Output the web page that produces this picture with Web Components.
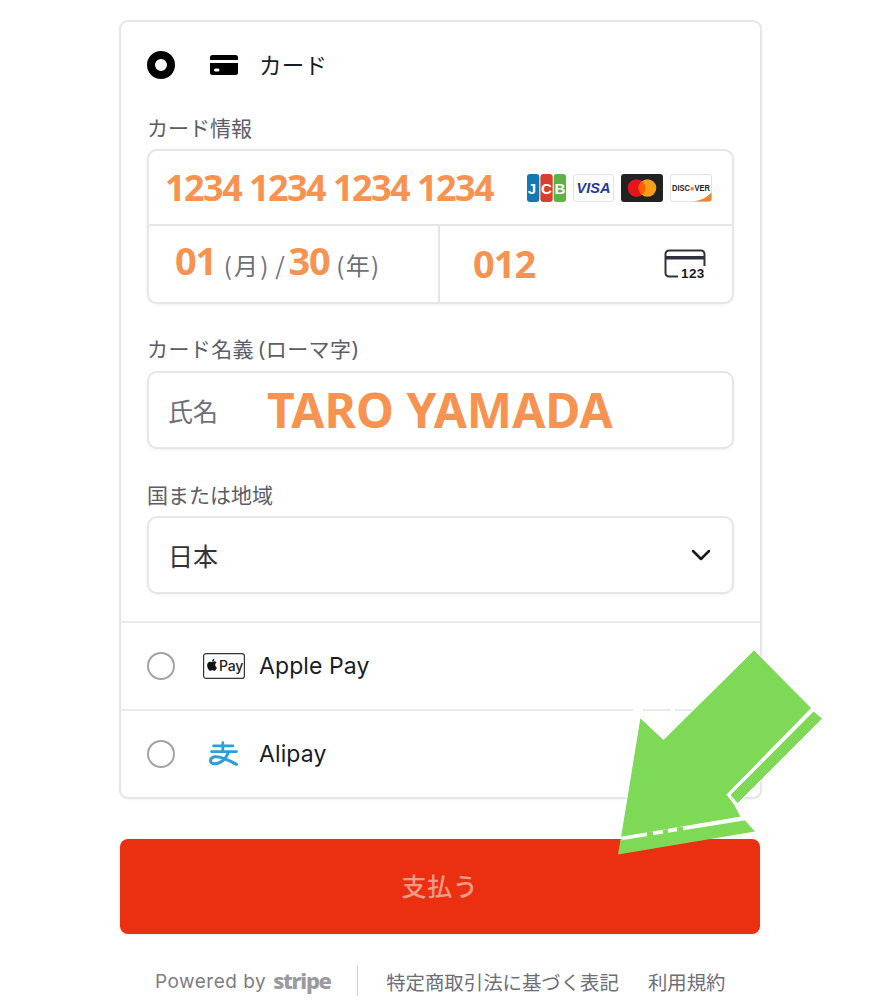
<!DOCTYPE html>
<html lang="ja"><head><meta charset="utf-8"><title>Payment</title>
<style>
html,body{margin:0;background:#fff}
body{font-family:"Noto Sans CJK JP","Noto Sans",sans-serif;color:#30313d;width:880px;height:1000px;overflow:hidden;position:relative}
</style></head><body>
<pay-page>
  <pay-methods>
    <pay-method selected label="カード">
      <svg slot="icon" width="28" height="20" viewBox="0 0 28 20" style="margin-left:7px"><path fill="#000" fill-rule="evenodd" d="M2.500 0h23A2.500 2.500 0 0 1 28 2.500V5H0V2.500A2.500 2.500 0 0 1 2.500 0zM0 8h28v9.500A2.500 2.500 0 0 1 25.500 20h-23A2.500 2.500 0 0 1 0 17.500zm5.500 5.500a1 1 0 0 0 0 3h2.500a1 1 0 0 0 0-3z"/></svg>
      <pay-label>カード情報</pay-label>
      <card-field></card-field>
      <pay-label class="second" style="height:43px"><span style="letter-spacing:.4px">カード名義 <span style="font-family:'Noto Sans',sans-serif">(</span>ローマ字<span style="font-family:'Noto Sans',sans-serif">)</span></span></pay-label>
      <pay-input>
        <span style="color:#6d6e78;font-size:25px;width:99px;flex:none">氏名</span>
        <orange-text size="48" spacing="0">TARO YAMADA</orange-text>
      </pay-input>
      <pay-label class="second" style="margin-top:25px">国または地域</pay-label>
      <pay-input>
        <span style="color:#30313d;font-size:25px;flex:1">日本</span>
        <svg width="20" height="12" viewBox="0 0 20 12" style="margin-right:2px"><path d="M2 2l8 8 8-8" fill="none" stroke="#1a1a1a" stroke-width="2.500" stroke-linecap="round" stroke-linejoin="round"/></svg>
      </pay-input>
    </pay-method>
    <pay-method label="Apple Pay">
      <svg slot="icon" width="42" height="26" viewBox="0 0 42 26"><rect x=".6" y=".6" width="40.800" height="24.800" rx="2.500" fill="#fff" stroke="#333" stroke-width="1.200"/><path fill="#111" d="M11.800 9.300c.5-.6.800-1.300.7-2-.7 0-1.500.4-1.900 1-.4.500-.8 1.300-.7 2 .7.100 1.400-.4 1.900-1zm.7 1c-1-.1-1.900.6-2.400.6s-1.300-.6-2.100-.5c-1.100 0-2.100.6-2.600 1.600-1.100 1.900-.3 4.700.8 6.300.5.8 1.200 1.600 2 1.600.8 0 1.100-.5 2.100-.5s1.300.5 2.100.5c.9 0 1.400-.8 1.900-1.600.6-.9.900-1.700.9-1.800 0 0-1.800-.7-1.800-2.700 0-1.700 1.400-2.500 1.400-2.500-.8-1.200-2-1.300-2.400-1.300z" transform="translate(-.5 -1.200) scale(.95)"/><text x="16" y="18" font-family="Inter,'Liberation Sans',sans-serif" font-size="14" font-weight="500" fill="#222" letter-spacing="-.2">Pay</text></svg>
    </pay-method>
    <pay-method label="Alipay">
      <svg slot="icon" width="32" height="26" viewBox="0 0 32 26" style="margin-left:5px"><g fill="none" stroke="#2a9fd8" stroke-linecap="round" stroke-linejoin="round"><path stroke-width="2.700" d="M5.500 4.800h19.500M14.800 1.500v9M3.500 10.600h25"/><path stroke-width="3" d="M20.500 11c-2 5.500-6.500 10-10.500 11.300-4 1.200-7.500.2-7.500-2.500 0-2.500 2.300-4 5.500-4 5 0 12 3 20.500 7.500"/></g></svg>
    </pay-method>
  </pay-methods>
  <pay-button>支払う</pay-button>
  <pay-footer></pay-footer>
</pay-page>
<pay-arrow></pay-arrow>
<script>
function def(name, html, init){
  customElements.define(name, class extends HTMLElement{
    connectedCallback(){
      if(this.shadowRoot) return;
      const r=this.attachShadow({mode:'open'});
      r.innerHTML=typeof html==='function'?html(this):html;
      if(init) init(this,r);
    }
  });
}
def('pay-page',`<style>:host{display:block;box-sizing:border-box;width:880px;height:1000px;padding:20px 119px 0;font-family:"Noto Sans CJK JP","Noto Sans",sans-serif}</style><slot></slot>`);
def('pay-methods',`<style>:host{display:block;box-sizing:border-box;width:643px;height:779px;border:2px solid #e6e6e6;border-radius:9px;background:#fff;box-shadow:0 1px 2px rgba(0,0,0,.05)}
::slotted(pay-method:not(:first-child)){border-top:2px solid #ebebeb}</style><slot></slot>`);
def('pay-method',h=>{const latin=/^[A-Z]/.test(h.getAttribute('label'));return `<style>
:host{display:block;box-sizing:border-box;height:88px}
:host([selected]){height:599px}
.row{display:flex;align-items:center;height:86px}
.radio{box-sizing:border-box;width:28px;height:28px;border-radius:50%;margin-left:26px;flex:none;border:2px solid #a3a3a3}
:host([selected]) .radio{border:8.500px solid #000;background:#fff}
.ic{width:56px;margin-left:28px;flex:none;display:flex;align-items:center;height:30px}
.t{font-size:22.500px;color:#1a1b25;font-family:"Noto Sans CJK JP",sans-serif;letter-spacing:.2px;margin-top:-3px}
.latin{font-family:"Inter","Liberation Sans",sans-serif;font-size:23px;letter-spacing:.1px;margin-top:0}
.body{padding:0 26px}
</style>
<div class="row"><span class="radio"></span><span class="ic"><slot name="icon"></slot></span><span class="t ${latin?'latin':''}">${h.getAttribute('label')}</span></div>
<div class="body"><slot></slot></div>`});
def('pay-label',`<style>:host{display:block;height:42px;line-height:40px;font-size:21px;color:#5c5d68;margin-top:-1px;white-space:nowrap}
:host(.second){margin-top:24px}</style><slot></slot>`);
def('pay-input',`<style>:host{display:flex;align-items:center;box-sizing:border-box;height:78px;width:587px;padding:0 19px;border:2px solid #e6e6e6;border-radius:10px;background:#fff;box-shadow:0 1px 3px rgba(0,0,0,.06)}</style><slot></slot>`);
def('orange-text',h=>`<style>:host{font-family:"Noto Sans",sans-serif;font-weight:700;color:#f79351;font-size:${h.getAttribute('size')}px;letter-spacing:${h.getAttribute('spacing')||0}px;line-height:1;white-space:pre}</style><slot></slot>`);
def('card-field',`<style>
:host{display:block;box-sizing:border-box;width:587px;height:155px;border:2px solid #e6e6e6;border-radius:10px;background:#fff;box-shadow:0 1px 3px rgba(0,0,0,.06)}
.top{display:flex;align-items:center;height:75px;box-sizing:border-box;border-bottom:2px solid #e6e6e6;padding:0 20px 0 16px;justify-content:space-between}
.bottom{display:grid;grid-template-columns:291px 1fr;height:76px}
.exp{display:flex;align-items:baseline;padding:11px 0 0 26px;border-right:2px solid #e6e6e6;color:#6d6e78;font-size:24px;line-height:56px;white-space:pre}
.a{letter-spacing:2.200px}.b{letter-spacing:-.7px}.c{letter-spacing:1.300px}
.cvc{display:flex;align-items:center;justify-content:space-between;padding:0 26px 0 33px}
</style>
<div class="top"><orange-text size="36" spacing="-1.550">1234 1234 1234 1234</orange-text><brand-logos></brand-logos></div>
<div class="bottom"><div class="exp"><orange-text size="38" spacing="-1.200">01</orange-text><span class="a"> (月)</span><span class="b"> / </span><orange-text size="38" spacing="-1.200">30</orange-text><span class="c"> (年)</span></div>
<div class="cvc"><orange-text size="38" spacing="-1" style="position:relative;top:-1px">012</orange-text>
<svg width="42" height="30" viewBox="0 0 42 30"><path d="M14 27.500H5a3.500 3.500 0 0 1-3.500-3.500V5A3.500 3.500 0 0 1 5 1.500h32A3.500 3.500 0 0 1 40.500 5v12" fill="none" stroke="#30313d" stroke-width="2"/><rect x="2" y="7" width="38" height="3.500" fill="#30313d"/><text x="17" y="28.500" font-family="'Liberation Sans',sans-serif" font-size="13.500" font-weight="700" fill="#1a1a1a" letter-spacing=".4">123</text></svg></div></div>`);
def('brand-logos',`<style>:host{display:flex;gap:7px;align-items:center}svg{display:block}</style>
<svg width="39" height="28" viewBox="0 0 39 28"><rect x="0" width="12.300" height="28" rx="3" fill="#1279b5"/><rect x="13.400" width="12.300" height="28" rx="3" fill="#d6402c"/><rect x="26.700" width="12.300" height="28" rx="3" fill="#5cb245"/><g font-family="'Liberation Sans',sans-serif" font-size="15" font-weight="700" fill="#fff" text-anchor="middle"><text x="5" y="20">J</text><text x="19.500" y="19.500">C</text><text x="33" y="19.500">B</text></g></svg>
<svg width="41" height="28" viewBox="0 0 41 28"><rect x=".5" y=".5" width="40" height="27" rx="2.500" fill="#fff" stroke="#e2e2e2"/><text x="20.500" y="19" font-family="'Liberation Sans',sans-serif" font-size="14.500" font-weight="700" font-style="italic" fill="#1f3a94" text-anchor="middle">VISA</text></svg>
<svg width="42" height="28" viewBox="0 0 42 28"><rect width="42" height="28" rx="3" fill="#222"/><circle cx="15.500" cy="14" r="8.800" fill="#e8141c"/><circle cx="26.500" cy="14" r="8.800" fill="#f79e1b"/><path d="M21 7.100a8.800 8.800 0 0 1 0 13.800 8.800 8.800 0 0 1 0-13.800z" fill="#ff5f00"/></svg>
<svg width="42" height="28" viewBox="0 0 42 28"><rect x=".5" y=".5" width="41" height="27" rx="2.500" fill="#fff" stroke="#e2e2e2"/><path d="M41.500 18.500V25a2.500 2.500 0 0 1-2.500 2.500H24C32 26 37 23 41.500 18.500z" fill="#e8873a"/><text x="21" y="16.800" font-family="'Liberation Sans',sans-serif" font-size="8.300" font-weight="700" fill="#222" text-anchor="middle" textLength="38" lengthAdjust="spacingAndGlyphs">DISC<tspan fill="#e8873a">●</tspan>VER</text></svg>`);
def('pay-button',`<style>:host{display:flex;align-items:center;justify-content:center;box-sizing:border-box;width:640px;height:95px;margin:40px 0 0 1px;padding-bottom:3px;border-radius:8px;background:#eb3012;color:#f29b86;font-size:25px;font-weight:500;letter-spacing:.6px;box-shadow:0 1px 3px rgba(0,0,0,.1)}</style><slot></slot>`);
def('pay-footer',`<style>:host{display:flex;align-items:center;height:32px;margin-top:31px;padding-left:36px;color:#7b7c85;font-size:19.400px;white-space:nowrap}
span{flex:none}
.p{font-family:"Inter","Liberation Sans",sans-serif;letter-spacing:.5px;font-size:19px}
.s{font-family:"Noto Sans",sans-serif;font-weight:800;font-size:22px;letter-spacing:-1.300px;color:#9a9aa0;margin-left:7px;position:relative;top:-1px}
.d{width:1.500px;height:30px;background:#cfcfd2;margin:0 28px 0 26px}
.l{margin-right:29px;color:#6d6e78}</style>
<span class="p">Powered by</span><span class="s">stripe</span><span class="d"></span><span class="l">特定商取引法に基づく表記</span><span class="l">利用規約</span>`);
def('pay-arrow',`<style>:host{position:absolute;left:0;top:0;width:880px;height:1000px;pointer-events:none}svg{display:block}</style>
<svg width="880" height="1000" viewBox="0 0 880 1000">
<path d="M633 710h10M671 710h4" stroke="#fff" stroke-width="3"/>
<g stroke="#fff" stroke-width="1" stroke-linejoin="miter">
<polygon fill="#7ed957" points="754,650 811.500,708 727,794.500 735,805.500 741,817 620.500,837.300 640,717.500 663.500,739.500"/>
<polygon fill="#7ed957" points="813.500,711 822.500,718.500 737.500,803.500 730,795"/>
</g>
<polygon fill="#7ed957" points="620.500,840 744.500,820 755,831.500 618,854.500"/>
<path d="M744.500 820L620.500 840" stroke="#fff" stroke-width=".8"/>
<g stroke="#7ed957" stroke-width="4.500"><path d="M647 834.500l6-1M663 832l5-.8M677 829.700l6-1"/></g>
</svg>`);
</script>
</body></html>
